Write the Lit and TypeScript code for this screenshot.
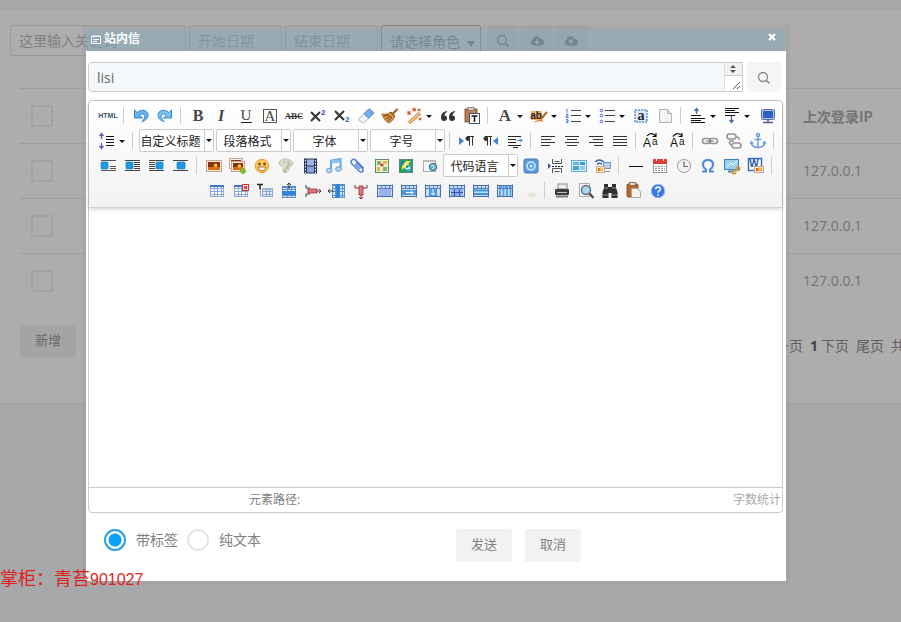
import { LitElement, html, svg, css, nothing, TemplateResult } from "lit";
import { customElement, property } from "lit/decorators.js";

type Art = TemplateResult;

const rules = (rows: [number, number, number][], color = "#222") =>
  svg`${rows.map(([x, y, w]) => svg`<rect x=${x} y=${y} width=${w} height="1" fill=${color} />`)}`;

const grid = (x: number, y: number, w: number, h: number, cols: number, rows: number, fill = "#fff", head = "#3f74c8", line = "#8aa8d4") => svg`
  <rect x=${x + 0.5} y=${y + 0.5} width=${w - 1} height=${h - 1} fill=${fill} stroke=${line} />
  ${Array.from({ length: cols - 1 }, (_, i) => svg`<rect x=${x + Math.round(((i + 1) * w) / cols)} y=${y} width="1" height=${h} fill=${line} />`)}
  ${Array.from({ length: rows - 1 }, (_, i) => svg`<rect x=${x} y=${y + Math.round(((i + 1) * h) / rows)} width=${w} height="1" fill=${line} />`)}
  <rect x=${x} y=${y} width=${w} height="2" fill=${head} />`;

const glyph = (t: string, size: number, extra = "", x = 10, y = 15, color = "#444") => svg`
  <text x=${x} y=${y} text-anchor="middle" font-family="Liberation Serif, serif" font-size=${size} style=${extra} fill=${color}>${t}</text>`;

const picture = (x: number, y: number, w: number, h: number) => svg`
  <rect x=${x + 0.5} y=${y + 0.5} width=${w - 1} height=${h - 1} fill="#fbeee4" stroke="#c9a58f" />
  <rect x=${x + 2} y=${y + 2} width=${w - 4} height=${h - 4} fill="#8a3210" />
  <rect x=${x + 2} y=${y + h - 5} width=${w - 4} height="3" fill="#d96c16" />
  <circle cx=${x + w * 0.6} cy=${y + h * 0.45} r="1.800" fill="#ffc540" />`;

const blueBox = (x: number, y: number, w: number) => svg`<rect x=${x} y=${y} width=${w} height="7" rx="1" fill="#1c9be2" stroke="#0a6cb0" stroke-width=".6" />`;

const frame = (inner: Art) => svg`
  <rect x="2" y="4" width="16" height="12" fill="#c5dcf6" />
  ${inner}
  <path d="M2.500 3.500v13M17.500 3.500v13M2 4.500h16M2 15.500h16" fill="none" stroke="#4a6ea8" />
  <path d="M6.500 4v3M10.500 4v3M14.500 4v3M2 7.500h16" stroke="#5c82bd" />`;

const icons: Record<string, Art> = {
  html: svg`<text x="10" y="12" text-anchor="middle" font-family="Liberation Sans, sans-serif" font-weight="700" font-size="7" fill="#35566f">HTML</text>`,
  undo: svg`<path d="M3.500 4v8h8l-2.800-2.600c2.400-2.200 5-1.400 5 1.100c0 1.900-1 3.400-2.800 5c4.200-1 6.400-3.700 6.100-6.900c-.4-4.400-6.400-6.200-10.700-2z" fill="#6cb4ee" stroke="#2a7ac2" stroke-width=".9" />`,
  redo: svg`<path d="M16.500 4v8h-8l2.800-2.600c-2.400-2.200-5-1.400-5 1.100c0 1.900 1 3.400 2.800 5c-4.200-1-6.400-3.700-6.100-6.900c.4-4.400 6.400-6.200 10.700-2z" fill="#7cc4ee" stroke="#2a7ac2" stroke-width=".9" />`,
  bold: glyph("B", 16, "font-weight:700"),
  italic: glyph("I", 16, "font-style:italic;font-weight:700", 9),
  underline: svg`${glyph("U", 15, "", 10, 14)}<rect x="5" y="16" width="11" height="1" fill="#222" />`,
  border: svg`<rect x="3.500" y="3.500" width="13" height="13" fill="#fff" stroke="#555" />${glyph("A", 15, "", 10, 15)}`,
  strike: svg`${glyph("ABC", 9, "font-weight:700", 10, 13)}<rect x="2" y="10" width="16" height="1" fill="#333" />`,
  sup: svg`<path d="M3 6l9 9M12 6l-9 9" stroke="#333" stroke-width="2" /><text x="13" y="9" font-family="Liberation Sans" font-weight="700" font-size="8" fill="#3b3fae">2</text>`,
  sub: svg`<path d="M3 5l9 9M12 5l-9 9" stroke="#333" stroke-width="2" /><text x="13" y="16" font-family="Liberation Sans" font-weight="700" font-size="8" fill="#2d62d0">2</text>`,
  eraser: svg`<path d="M3 13l9-9.500q1-1 2 0l3 2.500q.8 1 0 2l-8.500 8.500q-1 .8-2 0l-3-2q-1-.6-.5-1.500z" fill="#f3f8fd" stroke="#8c9fb5" stroke-width=".8" /><path d="M8 8l4.300-4.500q1-1 2 0l2.700 2.500q.8 1 0 2l-4.200 4.400z" fill="#74aee8" stroke="#4b86c4" stroke-width=".8" />`,
  broom: svg`<path d="M17.500 3l-5 5" stroke="#9a5a20" stroke-width="2" /><path d="M2 8q6 1 9-2l4 4q-1 4-6 7q-5-2-7-9z" fill="#d0954a" stroke="#8f571c" stroke-width=".8" /><path d="M10 6l5 4M4 10l5-1M6 13l5-3M8 15l4-4" stroke="#7a4312" />`,
  magic: svg`<path d="M5 17L16 7" stroke="#cf8a3b" stroke-width="3.500" /><path d="M5 17L16 7" stroke="#f6cf95" stroke-width="1.500" /><path d="M4 4l1 1.500h2l-1 1.500l1 2l-2-.6l-2 .6l.8-2l-1-1.500h1.500zM10 1l.8 1.500h1.700l-1 1.400l.5 1.600l-2-.6l-1.500.6l.3-1.600l-1-1.400h1.700zM16 11l.6 1.200h1.400l-.8 1.100l.4 1.300l-1.600-.5l-1.300.5l.3-1.300l-.8-1.100h1.300zM15 2l.6 1.200h1.400l-.8 1.100l.4 1.300l-1.600-.5l-1.300.5l.3-1.300l-.8-1.100h1.300z" fill="#e0532c" />`,
  quote: svg`<path d="M9 5q-6 1-6 6q0 4 3 4q3 0 3-3q0-2.600-2.600-2.600q.4-2.400 2.600-3.400zM17 5q-6 1-6 6q0 4 3 4q3 0 3-3q0-2.600-2.600-2.600q.4-2.400 2.600-3.400z" fill="#333" />`,
  pasteText: svg`<rect x="3" y="3" width="12" height="13" fill="#c07b50" stroke="#7c3f1b" stroke-width=".8" /><rect x="6" y="1.500" width="6" height="3" fill="#ccc" stroke="#777" stroke-width=".8" /><rect x="7.500" y="7.500" width="10" height="10" fill="#fff" stroke="#3b5270" /><path d="M9.500 10h6M12.500 10v6" stroke="#111" stroke-width="1.500" />`,
  color: glyph("A", 17, "font-weight:700", 10, 15, "#4a4a4a"),
  highlight: svg`<rect x="2" y="5" width="11" height="9" fill="#f6b06a" /><text x="7" y="13" text-anchor="middle" font-family="Liberation Sans" font-size="10" font-weight="700" fill="#222">ab</text><path d="M18 6l-6 7" stroke="#b06a28" stroke-width="2" /><path d="M6 16q4-2 7-1l-1-2" fill="none" stroke="#d9822e" stroke-width="1.300" />`,
  ol: svg`${rules([[8, 4, 10], [8, 9, 10], [8, 15, 10]], "#444")}<path d="M4 3v4M3 3.500h1M3 8.500h2v1.500h-2v1.500h2.500M3 13.500h2v3h-2M3 15h2" fill="none" stroke="#4b7fd0" />`,
  ul: svg`${rules([[8, 4, 10], [8, 9, 10], [8, 15, 10]], "#444")}<g fill="#fff" stroke="#3d63c0"><circle cx="4.500" cy="4.500" r="1.300" /><circle cx="4.500" cy="9.500" r="1.300" /><circle cx="4.500" cy="15.500" r="1.300" /></g>`,
  selectAll: svg`<rect x="4" y="4" width="12" height="12" fill="#dfe9fc" stroke="#88a5e0" stroke-width="2" stroke-dasharray="2 1" />${glyph("a", 14, "font-weight:700", 10, 14, "#222")}`,
  page: svg`<path d="M4.500 3.500h8l4 4v9h-12z" fill="#f4f4f4" stroke="#b2b2b2" /><path d="M12.500 3.500v4h4" fill="#ddd" stroke="#b2b2b2" />`,
  spaceTop: svg`${rules([[3, 9, 10], [3, 12, 14], [3, 14, 10], [3, 16, 14]], "#111")}<path d="M8.500 8v-6M6.500 5l2-2.500l2 2.500" fill="none" stroke="#4b66b5" stroke-width="1.300" />`,
  spaceBottom: svg`${rules([[3, 2, 14], [3, 4, 10], [3, 6, 14], [3, 9, 10]], "#111")}<path d="M9.500 10v7M7.500 14l2 2.500l2-2.500" fill="none" stroke="#4b66b5" stroke-width="1.300" />`,
  screen: svg`<g transform="translate(2 0)"><rect x="3.500" y="3.500" width="13" height="10" rx="1" fill="#a9c3ea" stroke="#5874a8" /><rect x="5" y="5" width="10" height="7" fill="#2d5fc4" /><path d="M10 14v2M5 16.500h10" stroke="#46618f" stroke-width="1.500" /></g>`,
  lineHeight: svg`${rules([[9, 5, 8], [9, 8, 8], [9, 11, 8], [9, 14, 8]], "#111")}<path d="M4.500 3v5M4.500 12v5M2.500 5l2-2.500l2 2.500M2.500 15l2 2.500l2-2.500" fill="none" stroke="#5a5fb0" stroke-width="1.300" />`,
  ltr: svg`<path d="M2 6v8l5-4z" fill="#3e86dd" /><path d="M12.500 5.500v9M15.500 5.500v9M10 5.500h7" stroke="#333" /><path d="M12 5q-3.500 0-3.500 2.500t3.500 2.500z" fill="#333" />`,
  rtl: svg`<path d="M17 6v8l-5-4z" fill="#3e86dd" /><path d="M6.500 5.500v9M9.500 5.500v9M4 5.500h7" stroke="#333" /><path d="M6 5q-3.500 0-3.500 2.500t3.500 2.500z" fill="#333" />`,
  indent: svg`${rules([[3, 5, 13], [3, 8, 8], [3, 11, 8], [3, 14, 13], [8, 16, 5]], "#222")}<path d="M12 9.500h5M15 7.500l2 2l-2 2" fill="none" stroke="#4a78d0" />`,
  left: rules([[3, 5, 14], [3, 8, 10], [3, 11, 14], [3, 14, 9]], "#333"),
  center: rules([[3, 5, 14], [5, 8, 10], [3, 11, 14], [5, 14, 10]], "#333"),
  right: rules([[3, 5, 14], [7, 8, 10], [3, 11, 14], [8, 14, 9]], "#333"),
  justify: rules([[3, 5, 14], [3, 8, 14], [3, 11, 14], [3, 14, 14]], "#333"),
  upper: svg`<path d="M4 5q3-4 7-1.500l2 2M13 2v3.500h-3.500" fill="none" stroke="#111" stroke-width="1.200" /><text x="0" y="16" font-family="Liberation Sans" font-size="12" fill="#111">A</text><text x="9" y="14" font-family="Liberation Sans" font-size="10" fill="#111">a</text>`,
  lower: svg`<path d="M15 5q-3-4-7-1.500l-2 2M15 2v3.500h-3.500" fill="none" stroke="#111" stroke-width="1.200" /><text x="3" y="16" font-family="Liberation Sans" font-size="12" fill="#111">A</text><text x="12" y="14" font-family="Liberation Sans" font-size="10" fill="#111">a</text>`,
  link: svg`<g fill="none" stroke="#959595" stroke-width="1.600"><rect x="2.500" y="7.500" width="8" height="5" rx="2.500" /><rect x="9.500" y="7.500" width="8" height="5" rx="2.500" /></g><path d="M6 10h8" stroke="#777" />`,
  unlink: svg`<g fill="none" stroke="#959595" stroke-width="1.600"><rect x="3" y="3" width="9" height="5" rx="2.500" /><rect x="8" y="12" width="9" height="5" rx="2.500" /><path d="M12 6q4 0 3 3M8 14q-4-1-2-4h4" /></g>`,
  anchor: svg`<g fill="none" stroke="#6c9fd6" stroke-width="1.500"><circle cx="10" cy="4" r="1.500" /><path d="M10 6v11M6.500 8.500h7M3 11q1 5.500 7 5.500t7-5.500" /></g><path d="M1.500 13l2-3.500l2.500 3zM18.500 13l-2-3.500l-2.500 3z" fill="#6c9fd6" />`,
  imgNone: svg`${rules([[2, 4, 15], [11, 10, 6], [11, 12, 6], [2, 14, 15]], "#555")}${blueBox(2, 6, 7)}`,
  imgLeft: svg`${rules([[2, 4, 15], [11, 6, 6], [11, 8, 6], [11, 10, 6], [11, 12, 6], [2, 14, 15]], "#444")}${blueBox(3, 6, 7)}`,
  imgRight: svg`${rules([[2, 4, 15], [2, 6, 6], [2, 8, 6], [2, 10, 6], [2, 12, 6], [2, 14, 15]], "#444")}${blueBox(9, 6, 7)}`,
  imgCenter: svg`${rules([[2, 4, 15], [2, 14, 15]], "#444")}${blueBox(6, 6, 8)}`,
  image: picture(2, 4, 16, 12),
  images: svg`${picture(1, 2, 14, 11)}${picture(3, 5, 14, 11)}<path d="M15 12v6M12 15h6" stroke="#7dbd2c" stroke-width="3" />`,
  emoji: svg`<circle cx="10" cy="10" r="6.700" fill="#fbc860" stroke="#e79a2e" /><circle cx="7.500" cy="8" r="1.200" fill="#5a3208" /><circle cx="12.500" cy="8" r="1.200" fill="#5a3208" /><path d="M6 11h8q-1 4-4 4t-4-4z" fill="#fff" stroke="#96500e" stroke-width=".8" />`,
  scrawl: svg`<path d="M3 6q3-4 8-3t6 4q0 3-3 3q-1 5-4 7q-3 .5-3-3q1-3-1-4q-4-1-3-4z" fill="#deded8" stroke="#b2b2a6" stroke-width=".8" /><circle cx="8" cy="6" r="1.300" fill="#e7b95c" /><circle cx="12" cy="6" r="1.300" fill="#8fc6df" /><path d="M8 16l6-9" stroke="#c8b88e" stroke-width="2" />`,
  video: svg`<rect x="4" y="2.500" width="13" height="15" fill="#2e3a5c" /><rect x="7" y="3.500" width="7" height="6" fill="#9fb4e6" /><rect x="7" y="10.500" width="7" height="6" fill="#8aa2dd" /><path d="M5.500 4v13M15.500 4v13" stroke="#fff" stroke-dasharray="1.500 1.500" />`,
  music: svg`<path d="M7 14V4.500l9.500-1.500v9.500" fill="none" stroke="#6aaade" stroke-width="2" /><path d="M7 6l9-1" stroke="#8cc3ec" stroke-width="3" /><ellipse cx="5.200" cy="14.500" rx="2.800" ry="2.300" fill="#b4d8f3" stroke="#5d9dd0" /><ellipse cx="14.500" cy="13" rx="2.800" ry="2.300" fill="#b4d8f3" stroke="#5d9dd0" />`,
  clip: svg`<path d="M8 6l6 6q2 2 .5 3.500t-3.500-.5L4 8q-2-2.500 0-4t4 .5l7.500 7.500M7 8l5 5" fill="none" stroke="#5580d0" stroke-width="1.500" />`,
  map: svg`<rect x="3.500" y="3.500" width="13" height="13" fill="#f1eeca" stroke="#5f8b6a" /><rect x="5" y="5" width="4" height="4" fill="#7ab47a" /><rect x="11" y="5" width="4" height="3" fill="#e2b54a" /><rect x="5" y="11" width="3" height="4" fill="#e3b35f" /><rect x="11" y="11" width="4" height="4" fill="#7fb273" /><circle cx="10" cy="9" r="1.600" fill="#c3402c" />`,
  gmap: svg`<rect x="3.500" y="3.500" width="13" height="13" fill="#20a45a" stroke="#5d8770" /><path d="M5 5h4l-4 5z" fill="#2878dc" /><path d="M10 5h5l-9 9v-4z" fill="#ffe14d" /><path d="M9 15l6-7v7z" fill="#42a0ee" /><path d="M13 8.500q-4-1-4 2t4 2v-2" fill="none" stroke="#fff" stroke-width="1.200" />`,
  iframe: svg`<rect x="3.500" y="4.500" width="12" height="11" fill="#f6f6f6" stroke="#aaa" /><rect x="3" y="4" width="13" height="2" fill="#bbb" /><circle cx="13" cy="11" r="3.700" fill="#65aecb" stroke="#32728f" /><path d="M11 10q2-2 3 0t-2 3" fill="none" stroke="#d6f0c8" />`,
  webapp: svg`<rect x="3" y="3" width="14" height="14" rx="2" fill="#5b9ede" stroke="#3f76b6" /><circle cx="10" cy="10" r="4" fill="#5ba0de" stroke="#d8edff" stroke-width="1.500" /><circle cx="10" cy="10" r="1.500" fill="#cfe6fb" />`,
  pageBreak: svg`<path d="M7.500 3v4.500h9V3M7.500 17v-4.500h9V17M9.500 5.500h5M9.500 15.500h5" fill="none" stroke="#555" /><path d="M7 10.500h11" stroke="#222" stroke-dasharray="2 1" /><path d="M3 7v6l3-3z" fill="#334f9a" />`,
  template: svg`<rect x="2.500" y="4.500" width="15" height="11" fill="#dff0fb" stroke="#6fa6cb" /><rect x="4" y="6" width="6" height="3" fill="#5fb4e0" /><rect x="11" y="6" width="5" height="3" fill="#2e9cd6" /><rect x="4" y="10" width="6" height="4" fill="#3fa6da" /><rect x="11" y="10" width="5" height="4" fill="#8fcbe9" />`,
  wifi: svg`<path d="M2 6q4-4 9 0M4 8.500q2.500-2.500 5 0" fill="none" stroke="#3466b8" stroke-width="1.400" /><rect x="10.500" y="6.500" width="7" height="6" fill="#b9d0f3" stroke="#7a96cb" /><path d="M12 15.500h5" stroke="#999" />${picture(3, 10, 9, 7)}`,
  hr: rules([[3, 10, 14]], "#111"),
  date: svg`<rect x="3.500" y="4.500" width="13" height="12" fill="#fff" stroke="#999" /><rect x="3" y="3" width="14" height="5" fill="#d9403c" /><path d="M6.500 2v3M13.500 2v3" stroke="#fff" /><path d="M5 10.500h10M5 12.500h10M5 14.500h10" stroke="#999" stroke-dasharray="2 1" />`,
  time: svg`<circle cx="10" cy="10" r="6.500" fill="#f3f3f3" stroke="#999" /><path d="M10 5.500v5h4" fill="none" stroke="#666" stroke-width="1.200" />`,
  omega: svg`<path d="M4 15.500h4v-2q-3-2-3-5q0-4.500 5-4.500t5 4.500q0 3-3 5v2h4" fill="none" stroke="#4f88d6" stroke-width="2" />`,
  snap: svg`<rect x="2.500" y="3.500" width="14" height="10" fill="#9bd2f0" stroke="#3b83b5" /><path d="M5 11l4-4l2 2l4-4" fill="none" stroke="#fff" /><path d="M6 15.500h6" stroke="#3b83b5" stroke-width="2" /><g fill="none" stroke="#c99a3a" stroke-width="1.500"><circle cx="12" cy="16" r="1.800" /><circle cx="16" cy="12.500" r="1.800" /></g>`,
  word: svg`<rect x="2.500" y="2.500" width="13" height="12" fill="#fff" stroke="#2d6cb4" stroke-width="1.400" /><text x="8" y="11" text-anchor="middle" font-family="Liberation Sans" font-size="10" font-weight="700" fill="#1c57a5">W</text>${picture(8, 10, 10, 7)}`,
  table: grid(3, 4, 14, 12, 4, 4),
  tableDel: svg`${grid(3, 4, 14, 12, 4, 4)}<rect x="11.500" y="3.500" width="6" height="6" fill="#fff" stroke="#cf2c2c" /><path d="M13 5l3 3M16 5l-3 3" stroke="#cf2c2c" stroke-width="1.300" />`,
  tableTitle: svg`<path d="M2 3.500h6M5 3.500v5" stroke="#222" stroke-width="1.500" />${grid(7, 7, 11, 9, 3, 3, "#e6eefb", "#9db3d6", "#8fa6cc")}<path d="M5.500 9v7" stroke="#8fa6cc" />`,
  rowInsert: svg`${grid(3, 5, 14, 12, 3, 4, "#d7e9fb", "#5290d2", "#5f92cc")}<rect x="3" y="10" width="14" height="4" fill="#2f86d8" /><path d="M10 8V2M8 4l2-2l2 2" fill="none" stroke="#333" />`,
  rowDelete: svg`<path d="M3 4v3h4M3 16v-3h4M14 10h4M16 8l2 2l-2 2" fill="none" stroke="#3c3c3c" /><rect x="5" y="8" width="9" height="4" fill="#dd777b" stroke="#98242b" stroke-width=".7" />`,
  colInsert: svg`${grid(5, 3, 13, 14, 4, 4, "#d7e9fb", "#5290d2", "#5f92cc")}<rect x="9" y="3" width="4" height="14" fill="#2f86d8" /><path d="M7 10H1M3 8l-2 2l2 2" fill="none" stroke="#333" />`,
  colDelete: svg`<path d="M4 4v3h4M16 4v3h-4M10 14v4M8 16l2 2l2-2" fill="none" stroke="#7d2d34" /><rect x="8" y="5" width="4" height="9" fill="#dd777b" stroke="#98242b" stroke-width=".7" />`,
  mergeCells: frame(svg`<rect x="4" y="7" width="12" height="8" fill="#9ab2ec" />`),
  mergeRight: frame(svg`<rect x="3" y="9" width="14" height="5" fill="#4a9be0" /><path d="M7 11.500h7M12 9.500l2 2l-2 2" fill="none" stroke="#fff" />`),
  mergeDown: frame(svg`<rect x="6" y="7" width="8" height="9" fill="#4a9be0" /><path d="M10 8v6M8 12l2 2l2-2" fill="none" stroke="#fff" />`),
  splitCells: frame(svg`<rect x="4" y="7" width="12" height="9" fill="#8fb0ee" /><path d="M4 11.500h12M7.500 7v9M12.500 7v9" stroke="#2f58a5" />`),
  splitRows: frame(svg`<path d="M3 9.500h14M3 13h14" stroke="#3f95de" stroke-width="2" />`),
  splitCols: frame(svg`<path d="M5 5v11M8.500 5v11M12 5v11M15.500 5v11" stroke="#4d9fe2" stroke-width="1.700" />`),
  chart: svg`<g opacity=".35"><path d="M5.500 5.500h6l2 2v7h-8z" fill="#fafafa" stroke="#eee" /><circle cx="14" cy="14" r="3" fill="#d9dba0" /><rect x="9" y="12" width="5" height="4" fill="#ccd3a5" /></g>`,
  print: svg`<rect x="6" y="3" width="9" height="5" fill="#eee" stroke="#888" /><rect x="3" y="8" width="14" height="6" rx="1" fill="#3c3c3c" /><path d="M4 15.500h12" stroke="#777" stroke-width="2" /><rect x="5" y="11" width="10" height="1" fill="#bbb" />`,
  preview: svg`<rect x="3.500" y="2.500" width="10" height="13" fill="#f7f7f7" stroke="#aaa" /><circle cx="10" cy="9" r="4.500" fill="#a7d5f2" stroke="#5b6b78" stroke-width="1.400" /><path d="M13.500 12.500l4 4.500" stroke="#5a4a3a" stroke-width="2.400" />`,
  find: svg`<path d="M4 3h4v3h4V3h4v4l1.500 4v6h-6v-5h-3v5h-6v-6L4 7z" fill="#2e2e2e" /><path d="M4 7h4M12 7h4M3 14h5M12 14h5" stroke="#8f8f8f" />`,
  paste: svg`<rect x="3" y="3" width="11" height="13" rx="1" fill="#b9672e" stroke="#7e431b" stroke-width=".8" /><rect x="5.500" y="1.500" width="6" height="3" fill="#ddd" stroke="#7c5a3c" stroke-width=".8" /><path d="M7.500 7.500h6l3 3v6h-9z" fill="#f1f1ee" stroke="#a9a9a2" />`,
  help: svg`<circle cx="10" cy="10" r="6.700" fill="#3b79e0" stroke="#8fb4f0" /><path d="M7.700 8.300q0-2.300 2.300-2.300t2.300 2q0 1.200-1.200 1.900q-1.100.6-1.100 1.900M10 13.200v1.500" fill="none" stroke="#fff" stroke-width="1.600" />`,
};

const labels: Record<string, string> = { undo: "撤销", redo: "重做", bold: "加粗", italic: "斜体", underline: "下划线", help: "帮助" };

// "|" is a divider, "name+" a button with a drop-down arrow, "=text" a drop-down list
const toolbar = [
  "html | undo redo | bold italic underline border strike sup sub eraser broom magic+ quote pasteText | color+ highlight+ ol+ ul+ selectAll page | spaceTop+ spaceBottom+ screen",
  "lineHeight+ | =自定义标题 =段落格式 =字体 =字号 | ltr rtl indent | left center right justify | upper lower | link unlink anchor |",
  "imgNone imgLeft imgRight imgCenter | image images emoji scrawl video music clip map gmap iframe =代码语言 webapp pageBreak template wifi | hr date time omega snap word |",
  "table tableDel tableTitle rowInsert rowDelete colInsert colDelete mergeCells mergeRight mergeDown splitCells splitRows splitCols chart | print preview find paste help",
];

const searchIcon = html`<svg width="14" height="14" viewBox="0 0 14 14" aria-hidden="true"><circle cx="6" cy="6" r="4.500" fill="none" stroke="currentColor" stroke-width="1.300" /><path d="M9 9l3.500 3.500" stroke="currentColor" stroke-width="1.500" /></svg>`;

const cloud = (up: boolean) => html`<svg width="14" height="12" viewBox="0 0 14 12" aria-hidden="true"><path d="M3.500 10.500a3 3 0 0 1-.8-5.800a3.800 3.800 0 0 1 7.300-1a3.400 3.400 0 0 1 1 6.800z" fill="currentColor" /><path d=${up ? "M7 9V5.500M5 7l2-2l2 2" : "M7 4v3.500M5 6.500l2 2l2-2"} fill="none" stroke="#a6adb1" stroke-width="1.300" /></svg>`;

@customElement("editor-toolbar")
class EditorToolbar extends LitElement {
  static styles = css`
    :host {
      display: block;
      padding: 2px 0 4px 3px;
      background: linear-gradient(#fff, #f2f2f2);
      border-bottom: 1px solid #d0d0d0;
      box-shadow: 0 1px 4px rgba(0, 0, 0, 0.2);
      border-radius: 4px 4px 0 0;
    }
    .row { display: flex; justify-content: center; align-items: center; height: 25px; }
    .tool {
      flex: none; display: flex; align-items: center; width: 24px; height: 22px;
      padding: 0 2px; border: 0; background: none;
    }
    .tool.split { width: 34px; }
    .icon { flex: none; width: 20px; height: 20px; }
    .arrow { flex: none; width: 0; border: 3px solid transparent; border-top-color: #111; border-bottom: 0; margin: 1px 0 0 2px; }
    .rule { flex: none; width: 1px; height: 17px; margin: 0 5px 0 3px; background: #ccc; }
    .combo { flex: none; position: relative; width: 75px; height: 23px; margin: 0 1px; box-sizing: border-box; border: 1px solid #ccc; background: #fff; border-radius: 2px; }
    .combo select {
      appearance: none; width: 100%; height: 21px; border: 0; padding: 0 12px 0 0; background: none;
      font: 12px/20px "Noto Sans CJK SC", sans-serif; color: #222; text-align-last: center;
    }
    .drop { position: absolute; right: 0; top: 0; height: 21px; width: 8px; border-left: 1px solid #ccc; display: flex; align-items: center; pointer-events: none; background: #fff; }
    .drop .arrow { margin: 0 0 0 1px; }
  `;

  item(token: string) {
    if (token === "|") return html`<span class="rule"></span>`;
    if (token[0] === "=")
      return html`<span class="combo"><select aria-label=${token.slice(1)}><option>${token.slice(1)}</option></select><span class="drop"><span class="arrow"></span></span></span>`;
    const split = token.endsWith("+");
    const name = split ? token.slice(0, -1) : token;
    return html`<button type="button" class="tool ${split ? "split" : ""}" aria-label=${labels[name] ?? name}>
      <svg class="icon" viewBox="0 0 20 20" aria-hidden="true">${icons[name]}</svg>${split ? html`<span class="arrow"></span>` : nothing}
    </button>`;
  }

  render() {
    return toolbar.map((row) => html`<div class="row">${row.split(" ").map((t) => this.item(t))}</div>`);
  }
}

@customElement("message-dialog")
class MessageDialog extends LitElement {
  @property() recipient = "lisi";

  static styles = css`
    :host { display: block; box-shadow: 0 0 0 4px rgba(150, 152, 154, 0.25); font: 14px/20px "Open Sans", "Noto Sans CJK SC", sans-serif; color: #808080; }
    .title { display: flex; align-items: center; height: 22px; padding: 0 8px 0 5px; background: rgba(132, 170, 190, 0.5); color: #fff; }
    h2 { flex: 1; margin: 0 0 4px 3px; font: bold 12px/18px "Noto Sans CJK SC", sans-serif; }
    .close { border: 0; padding: 0; width: 12px; height: 16px; margin-bottom: 6px; background: none; color: #fff; display: flex; align-items: center; justify-content: center; }
    .mark { margin-bottom: 1px; }
    .body { background: #fff; padding: 11px 3px 19px 2px; }
    .to { display: flex; gap: 4px; }
    .field { flex: 1; display: flex; height: 30px; box-sizing: border-box; border: 1px solid #ccc; border-radius: 4px 0 0 4px; background: #f4f8fc; }
    textarea { flex: 1; resize: none; overflow: hidden; border: 0; background: none; padding: 5px 8px 3px; font: inherit; color: #666; height: 28px; box-sizing: border-box; outline: 0; }
    .grip { width: 17px; display: flex; flex-direction: column; border-left: 1px solid #ddd; background: #fff; }
    .find { width: 34px; height: 30px; border: 0; border-radius: 2px; background: #f5f5f5; color: #888; padding: 0; margin-right: 2px; }
    .find svg { vertical-align: middle; }
    .editor { margin-top: 8px; border: 1px solid #ccc; border-radius: 4px; }
    .text { height: 279px; outline: 0; }
    .status { display: flex; justify-content: space-between; height: 24px; border-top: 1px solid #ccc; padding: 0 1px 0 160px; font-size: 12px; line-height: 24px; }
    .count { color: #aaa; }
    .foot { display: flex; align-items: center; padding: 16px 17px 0 16px; }
    .choice { display: flex; align-items: center; gap: 10px; margin-right: 9px; height: 22px; margin-bottom: 11px; }
    .choice input { appearance: none; width: 22px; height: 22px; margin: 0; box-sizing: border-box; border: 2px solid #e6e6e6; border-radius: 50%; background: #fff; }
    .choice input:checked { border-color: #2b9fd8; background: radial-gradient(circle, #0aa0f5 0 6px, #fff 7px); }
    .actions { display: flex; gap: 13px; margin-left: 186px; }
    .btn { width: 56px; height: 33px; border: 0; border-radius: 3px; background: #f2f2f2; color: #808080; font: 13px/20px "Noto Sans CJK SC", sans-serif; padding: 0 0 3px; }
  `;

  render() {
    return html`
      <div class="title">
        <svg class="mark" width="10" height="9" viewBox="0 0 10 9" aria-hidden="true"><path d="M.5 1.500h9v7h-9zM0 1h10M2 4.500h6M2 6.500h4" fill="none" stroke="#fff" /></svg>
        <h2>站内信</h2>
        <button class="close" aria-label="关闭"><svg width="8" height="8" viewBox="0 0 8 8"><path d="M1 1l6 6M7 1l-6 6" stroke="#fff" stroke-width="2.200" /></svg></button>
      </div>
      <div class="body">
        <div class="to">
          <div class="field">
            <textarea rows="1" aria-label="收件人" .value=${this.recipient}></textarea>
            <svg class="grip" width="17" height="28" viewBox="0 0 17 28" aria-hidden="true"><rect width="17" height="12" fill="#f1f1f1" /><path d="M0 12.500h17" stroke="#ccc" /><path d="M5 5l3-3l3 3zM5 7l3 3l3-3z" fill="#555" /><path d="M8 26l7-7M12 26l3-3" stroke="#555" /></svg>
          </div>
          <button class="find" aria-label="搜索">${searchIcon}</button>
        </div>
        <div class="editor">
          <editor-toolbar></editor-toolbar>
          <div class="text" contenteditable="true" role="textbox" aria-label="正文"></div>
          <div class="status"><span>元素路径:</span><span class="count">字数统计</span></div>
        </div>
        <div class="foot">
          <label class="choice"><input type="radio" name="format" checked />带标签</label>
          <label class="choice"><input type="radio" name="format" />纯文本</label>
          <div class="actions"><button class="btn">发送</button><button class="btn">取消</button></div>
        </div>
      </div>
    `;
  }
}

@customElement("app-root")
class AppRoot extends LitElement {
  static styles = css`
    :host { display: block; position: relative; overflow: hidden; min-height: 100vh; background: #a6a8aa; box-sizing: border-box; padding-top: 10px; font: 14px/20px "Open Sans", "Noto Sans CJK SC", sans-serif; color: #737373; }
    .panel { background: #adadad; padding: 15px 0 45px; box-shadow: 0 1px 2px rgba(130, 135, 140, 0.3); }
    .filters { display: flex; gap: 3px; padding: 0 10px; }
    .filters input, .filters select { box-sizing: border-box; height: 31px; border: 1px solid #989898; border-radius: 3px; background: #adadad; padding: 0 8px; font: inherit; color: #757575; }
    .filters ::placeholder { color: #808080; opacity: 1; }
    .keyword { width: 176px; }
    .day { width: 93px; }
    .role { position: relative; margin-right: 3px; }
    .role select { appearance: none; width: 100px; padding-top: 2px; border-color: #777; color: #686868; }
    .role .arrow { position: absolute; right: 6px; top: 16px; border: 4px solid transparent; border-top: 6px solid #666; border-bottom: 0; pointer-events: none; }
    .tool { width: 31px; height: 31px; padding: 4px 0 0; border: 0; border-radius: 3px; background: #a6a6a6; color: #606468; }
    .list { width: calc(100% - 20px); margin: 32px 0 0 20px; border-collapse: collapse; table-layout: fixed; }
    .list th, .list td { height: 54px; padding: 0; border-top: 1px solid #9d9d9d; text-align: left; white-space: nowrap; }
    .list th { font-size: 14px; font-family: "Noto Sans CJK SC", sans-serif; }
    .check { width: 62px; }
    .ip { width: 98px; }
    .list input { appearance: none; display: block; box-sizing: border-box; width: 22px; height: 22px; margin: 0 0 0 11px; border: 2px solid #a2a2a2; border-radius: 2px; }
    .below { display: flex; justify-content: space-between; align-items: center; margin: 17px 0 0 20px; height: 33px; }
    .add { width: 56px; height: 33px; border: 0; border-radius: 3px; background: #a4a4a4; color: #6a6a6a; font: 13px/20px "Noto Sans CJK SC", sans-serif; padding: 0 0 3px; }
    .pages { display: flex; gap: 7px; width: 140px; margin-top: 9px; white-space: nowrap; overflow: hidden; color: #606060; }
    .pages a { color: inherit; text-decoration: none; flex: none; }
    .pages b { margin-right: -4px; color: #444; }
    .dialog { position: absolute; left: 86px; top: 29px; width: 700px; }
    .stamp { position: absolute; left: 0; top: 564px; margin: 0; font: 18px/26px "Noto Sans CJK SC", sans-serif; color: #e01f1f; }
    .stamp span { font: 16px/26px "Liberation Sans", sans-serif; }
  `;

  render() {
    const rows = ["127.0.0.1", "127.0.0.1", "127.0.0.1"];
    return html`
      <main class="panel">
        <form class="filters">
          <input class="keyword" placeholder="这里输入关键词" aria-label="关键词" />
          <input class="day" placeholder="开始日期" aria-label="开始日期" />
          <input class="day" placeholder="结束日期" aria-label="结束日期" />
          <span class="role"><select aria-label="角色"><option>请选择角色</option></select><span class="arrow"></span></span>
          <button type="button" class="tool" aria-label="搜索">${searchIcon}</button>
          <button type="button" class="tool" aria-label="导出">${cloud(false)}</button>
          <button type="button" class="tool" aria-label="导入">${cloud(true)}</button>
        </form>
        <table class="list">
          <thead><tr><th class="check"><input type="checkbox" aria-label="全选" /></th><th></th><th class="ip">上次登录IP</th></tr></thead>
          <tbody>${rows.map((ip) => html`<tr><td><input type="checkbox" aria-label="选择" /></td><td></td><td>${ip}</td></tr>`)}</tbody>
        </table>
        <div class="below">
          <button class="add">新增</button>
          <nav class="pages"><a href="#">上一页</a><b>1</b><a href="#">下页</a><a href="#">尾页</a><a href="#">共</a></nav>
        </div>
      </main>
      <message-dialog class="dialog" role="dialog" aria-label="站内信"></message-dialog>
      <p class="stamp">掌柜：青苔<span>901027</span></p>
    `;
  }
}
